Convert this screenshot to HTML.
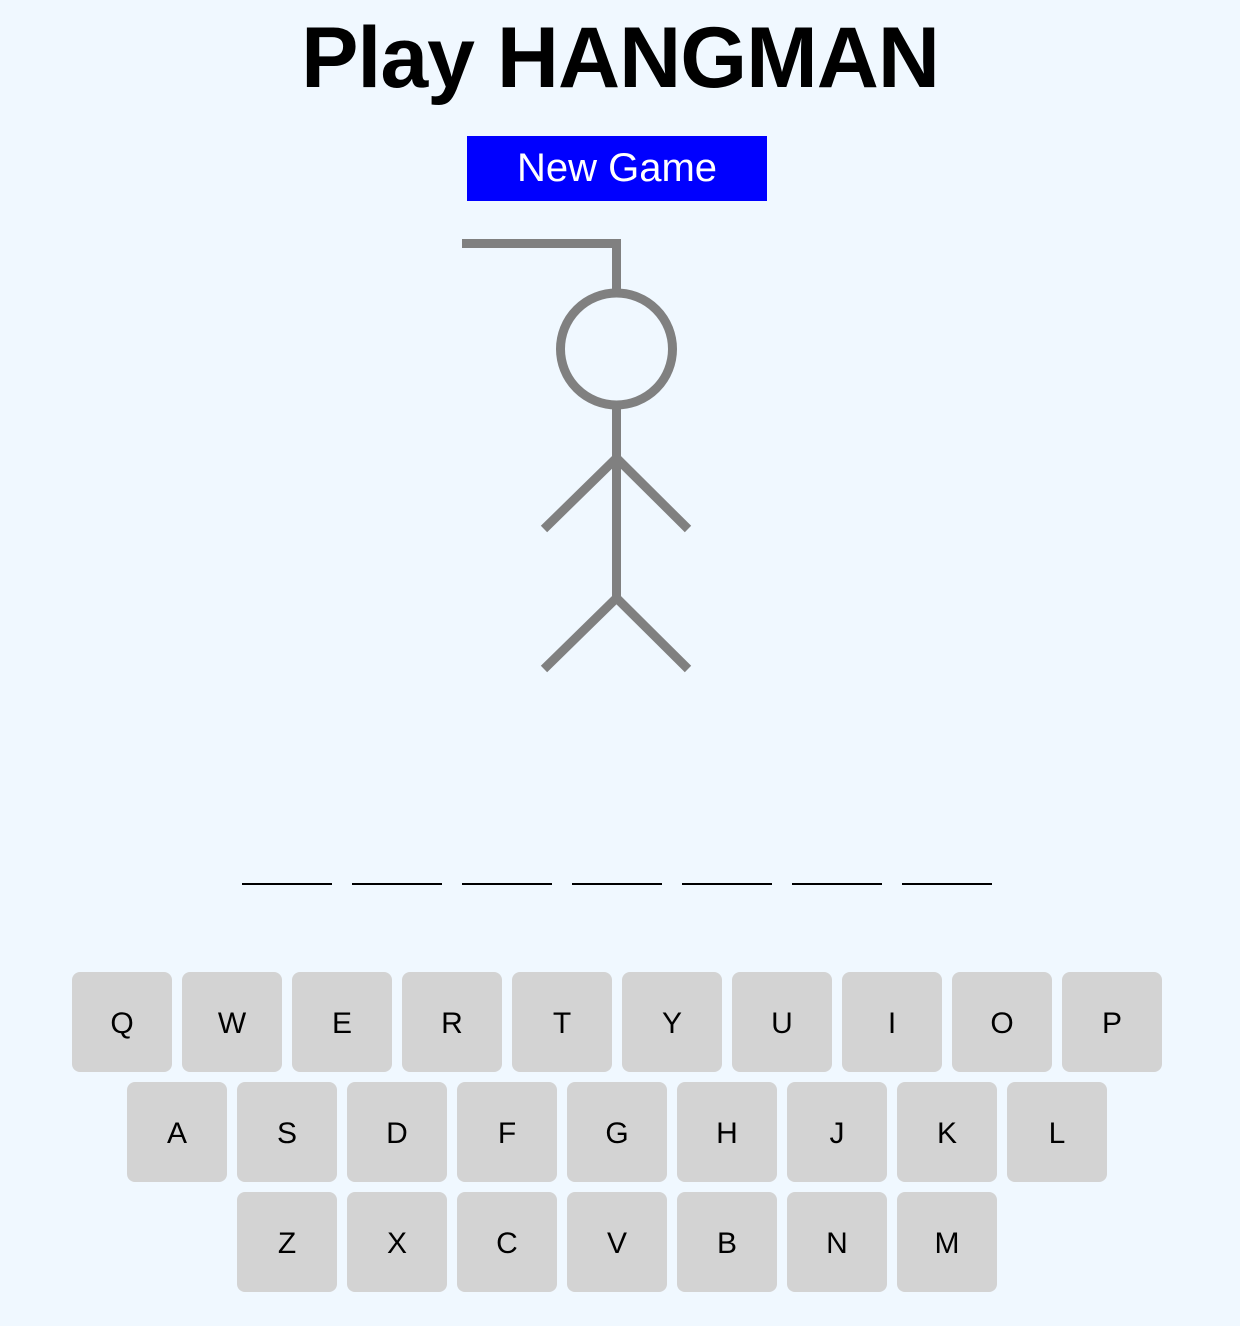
<!DOCTYPE html>
<html><head><style>
body{margin:0;background:#f0f8ff;width:1240px;height:1326px;position:relative;overflow:hidden;font-family:"Liberation Sans",sans-serif}
h1{position:absolute;left:0;width:1240px;top:-2px;margin:0;text-align:center;font-size:86px;font-weight:bold;line-height:120px;color:#000;letter-spacing:-1px}
.btn{position:absolute;left:467px;top:136px;width:300px;height:65px;background:#0000ff;color:#fff;font-size:40px;line-height:65px;text-align:center}
.u{position:absolute;top:883px;width:90px;height:2px;background:#000}
.k{position:absolute;width:100px;height:100px;background:#d3d3d3;border-radius:8px;font-size:30px;line-height:104px;text-align:center;color:#000}
</style></head><body>
<h1>Play HANGMAN</h1>
<div class="btn">New Game</div>
<svg style="position:absolute;left:0;top:0" width="1240" height="700">
<g stroke="#808080" stroke-width="9" fill="none">
<polyline points="462,243.5 616.5,243.5 616.5,292"/>
<circle cx="616.5" cy="349" r="56"/>
<line x1="616.5" y1="405" x2="616.5" y2="600"/>
<line x1="616.5" y1="458" x2="544" y2="529"/>
<line x1="616.5" y1="458" x2="688" y2="529"/>
<line x1="616.5" y1="598" x2="544" y2="669"/>
<line x1="616.5" y1="598" x2="688" y2="669"/>
</g></svg>
<div class="u" style="left:242px"></div><div class="u" style="left:352px"></div><div class="u" style="left:462px"></div><div class="u" style="left:572px"></div><div class="u" style="left:682px"></div><div class="u" style="left:792px"></div><div class="u" style="left:902px"></div>
<div class="k" style="left:72px;top:972px">Q</div><div class="k" style="left:182px;top:972px">W</div><div class="k" style="left:292px;top:972px">E</div><div class="k" style="left:402px;top:972px">R</div><div class="k" style="left:512px;top:972px">T</div><div class="k" style="left:622px;top:972px">Y</div><div class="k" style="left:732px;top:972px">U</div><div class="k" style="left:842px;top:972px">I</div><div class="k" style="left:952px;top:972px">O</div><div class="k" style="left:1062px;top:972px">P</div>
<div class="k" style="left:127px;top:1082px">A</div><div class="k" style="left:237px;top:1082px">S</div><div class="k" style="left:347px;top:1082px">D</div><div class="k" style="left:457px;top:1082px">F</div><div class="k" style="left:567px;top:1082px">G</div><div class="k" style="left:677px;top:1082px">H</div><div class="k" style="left:787px;top:1082px">J</div><div class="k" style="left:897px;top:1082px">K</div><div class="k" style="left:1007px;top:1082px">L</div>
<div class="k" style="left:237px;top:1192px">Z</div><div class="k" style="left:347px;top:1192px">X</div><div class="k" style="left:457px;top:1192px">C</div><div class="k" style="left:567px;top:1192px">V</div><div class="k" style="left:677px;top:1192px">B</div><div class="k" style="left:787px;top:1192px">N</div><div class="k" style="left:897px;top:1192px">M</div>
</body></html>
